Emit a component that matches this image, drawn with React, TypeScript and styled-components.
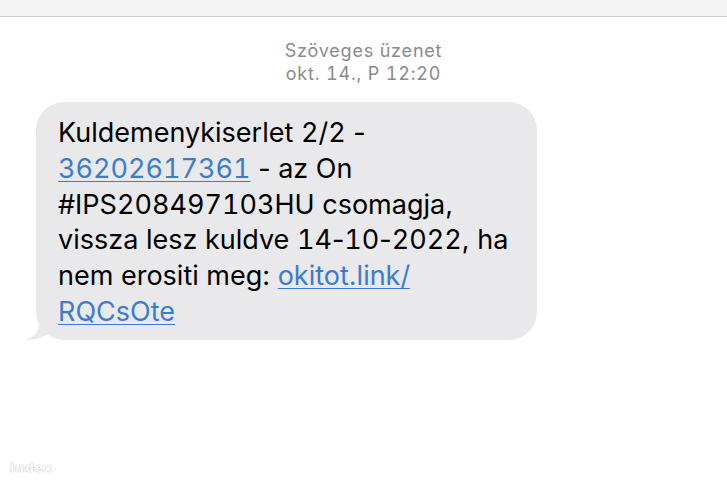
import styled, { createGlobalStyle } from "styled-components";

const GlobalStyle = createGlobalStyle`
  html, body {
    margin: 0;
    padding: 0;
    background: #ffffff;
  }
  body {
    font-family: Inter, Roboto, "Liberation Sans", Arial, sans-serif;
  }
`;

export default function App() {
  return (
    <Page>
      <GlobalStyle />
      <TopBar />
      <Header>
        <div>Szöveges üzenet</div>
        <div>okt. 14., P 12:20</div>
      </Header>
      <Thread>
        <Bubble>
          <Tail width="30" height="26" viewBox="0 0 30 26">
            <path d="M14 0 L14 10 C14 18 8 24 0 26 C9 26 17 24 24 19 L30 19 L30 0 Z" fill="#e9e9eb" />
          </Tail>
          Kuldemenykiserlet <Num>2</Num>/<Num>2</Num> -<br />
          <Link><Num>36202617361</Num></Link> - az On<br />
          #IPS<Num>208497103</Num>HU csomagja,<br />
          vissza lesz kuldve <Num>14</Num>-<Num>10</Num>-<Num>2022</Num>, ha<br />
          nem erositi meg: <Link>okitot.link/</Link>
          <br />
          <Link>RQCsOte</Link>
        </Bubble>
      </Thread>
      <Watermark>index</Watermark>
    </Page>
  );
}

const Page = styled.div`
  position: relative;
  height: 100vh;
  display: flex;
  flex-direction: column;
  overflow: hidden;
`;

const TopBar = styled.div`
  height: 16px;
  flex-shrink: 0;
  background: #f4f4f4;
  border-bottom: 1px solid #cfcfcf;
`;

const Header = styled.div`
  margin-top: 22px;
  text-align: center;
  font-size: 18px;
  line-height: 23px;
  letter-spacing: 0.8px;
  font-feature-settings: "tnum";
  color: #8a8a8e;
`;

const Thread = styled.div`
  display: flex;
  padding: 17px 0 0 36px;
`;

const Bubble = styled.div`
  position: relative;
  width: 501px;
  box-sizing: border-box;
  padding: 13px 10px 10px 22px;
  background: #e9e9eb;
  border-radius: 28px;
  color: #000;
  font-size: 27px;
  line-height: 35.8px;
`;

const Num = styled.span`
  font-feature-settings: "tnum";
`;

const Tail = styled.svg`
  position: absolute;
  left: -11px;
  bottom: 0;
`;

const Link = styled.span`
  color: #3a7ccf;
  text-decoration: underline;
  text-decoration-thickness: 1px;
  text-underline-offset: 3px;
`;

const Watermark = styled.div`
  position: absolute;
  left: 10px;
  bottom: 10px;
  font-family: "DejaVu Sans", sans-serif;
  font-weight: bold;
  font-size: 13px;
  letter-spacing: 0.5px;
  color: #ffffff;
  text-shadow: 0 0 1px #b5b5b5, 0 0 1px #b5b5b5;
`;
